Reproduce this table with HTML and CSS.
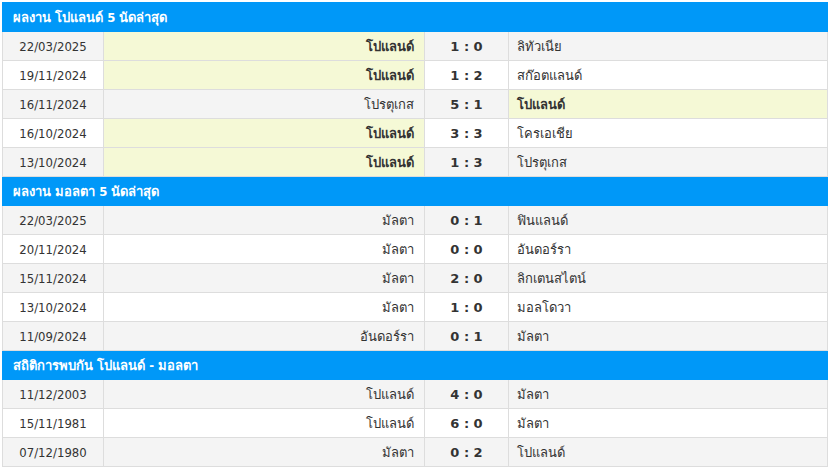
FILE: index.html
```html
<!DOCTYPE html>
<html lang="th">
<head>
  <meta charset="UTF-8">
  <title>ผลงาน โปแลนด์ - มอลตา</title>
  <link rel="stylesheet" href="styles.css">
</head>
<body>
  <div class="wrap">
    <table class="results">
      <colgroup>
        <col class="c-date"><col class="c-home"><col class="c-score"><col class="c-away">
      </colgroup>
      <!-- โปแลนด์ -->
      <tr class="head"><th colspan="4">ผลงาน โปแลนด์ 5 นัดล่าสุด</th></tr>
      <tr><td class="date">22/03/2025</td><td class="home hl">โปแลนด์</td><td class="score">1 : 0</td><td class="away">ลิทัวเนีย</td></tr>
      <tr><td class="date">19/11/2024</td><td class="home hl">โปแลนด์</td><td class="score">1 : 2</td><td class="away">สก๊อตแลนด์</td></tr>
      <tr><td class="date">16/11/2024</td><td class="home">โปรตุเกส</td><td class="score">5 : 1</td><td class="away hl">โปแลนด์</td></tr>
      <tr><td class="date">16/10/2024</td><td class="home hl">โปแลนด์</td><td class="score">3 : 3</td><td class="away">โครเอเชีย</td></tr>
      <tr><td class="date">13/10/2024</td><td class="home hl">โปแลนด์</td><td class="score">1 : 3</td><td class="away">โปรตุเกส</td></tr>
      <!-- มอลตา -->
      <tr class="head"><th colspan="4">ผลงาน มอลตา 5 นัดล่าสุด</th></tr>
      <tr><td class="date">22/03/2025</td><td class="home">มัลตา</td><td class="score">0 : 1</td><td class="away">ฟินแลนด์</td></tr>
      <tr><td class="date">20/11/2024</td><td class="home">มัลตา</td><td class="score">0 : 0</td><td class="away">อันดอร์รา</td></tr>
      <tr><td class="date">15/11/2024</td><td class="home">มัลตา</td><td class="score">2 : 0</td><td class="away">ลิกเตนสไตน์</td></tr>
      <tr><td class="date">13/10/2024</td><td class="home">มัลตา</td><td class="score">1 : 0</td><td class="away">มอลโดวา</td></tr>
      <tr><td class="date">11/09/2024</td><td class="home">อันดอร์รา</td><td class="score">0 : 1</td><td class="away">มัลตา</td></tr>
      <!-- เจอกัน -->
      <tr class="head"><th colspan="4">สถิติการพบกัน โปแลนด์ - มอลตา</th></tr>
      <tr><td class="date">11/12/2003</td><td class="home">โปแลนด์</td><td class="score">4 : 0</td><td class="away">มัลตา</td></tr>
      <tr><td class="date">15/11/1981</td><td class="home">โปแลนด์</td><td class="score">6 : 0</td><td class="away">มัลตา</td></tr>
      <tr><td class="date">07/12/1980</td><td class="home">มัลตา</td><td class="score">0 : 2</td><td class="away">โปแลนด์</td></tr>
    </table>
  </div>
</body>
</html>
```

FILE: styles.css
```css
body, html {
  margin: 0; padding: 0;
  font-family: Tahoma, "DejaVu Sans Condensed", "DejaVu Sans", sans-serif;
  background: #fff; color: #333;
}
.wrap { padding: 2px; }
.results {
  width: 100%; border-collapse: collapse;
  font-size: 13px; table-layout: fixed;
}
.c-date { width: 101px; }
.c-home { width: 321px; }
.c-score { width: 84px; }
/* Kopfzeile */
.head th {
  background: #0098f8; color: #fff;
  text-align: left; font-weight: bold;
  height: 28px; padding: 0 10px;
  border: 1px solid #0098f8;
}
.results td {
  height: 28px; padding: 0 10px;
  border: 1px solid #ddd;
}
.results tr:nth-child(odd) td { background: #fff; }
.results tr:nth-child(even) td { background: #f4f4f4; }
.results .head + tr td { background: #f4f4f4; }
.date { text-align: center; }
.home { text-align: right; }
.score { text-align: center; font-weight: bold; font-family: "DejaVu Sans", sans-serif; }
.results td.away { text-align: left; padding-left: 8px; }
.results tr td.hl { background: #f5f9d6; font-weight: bold; }
```
